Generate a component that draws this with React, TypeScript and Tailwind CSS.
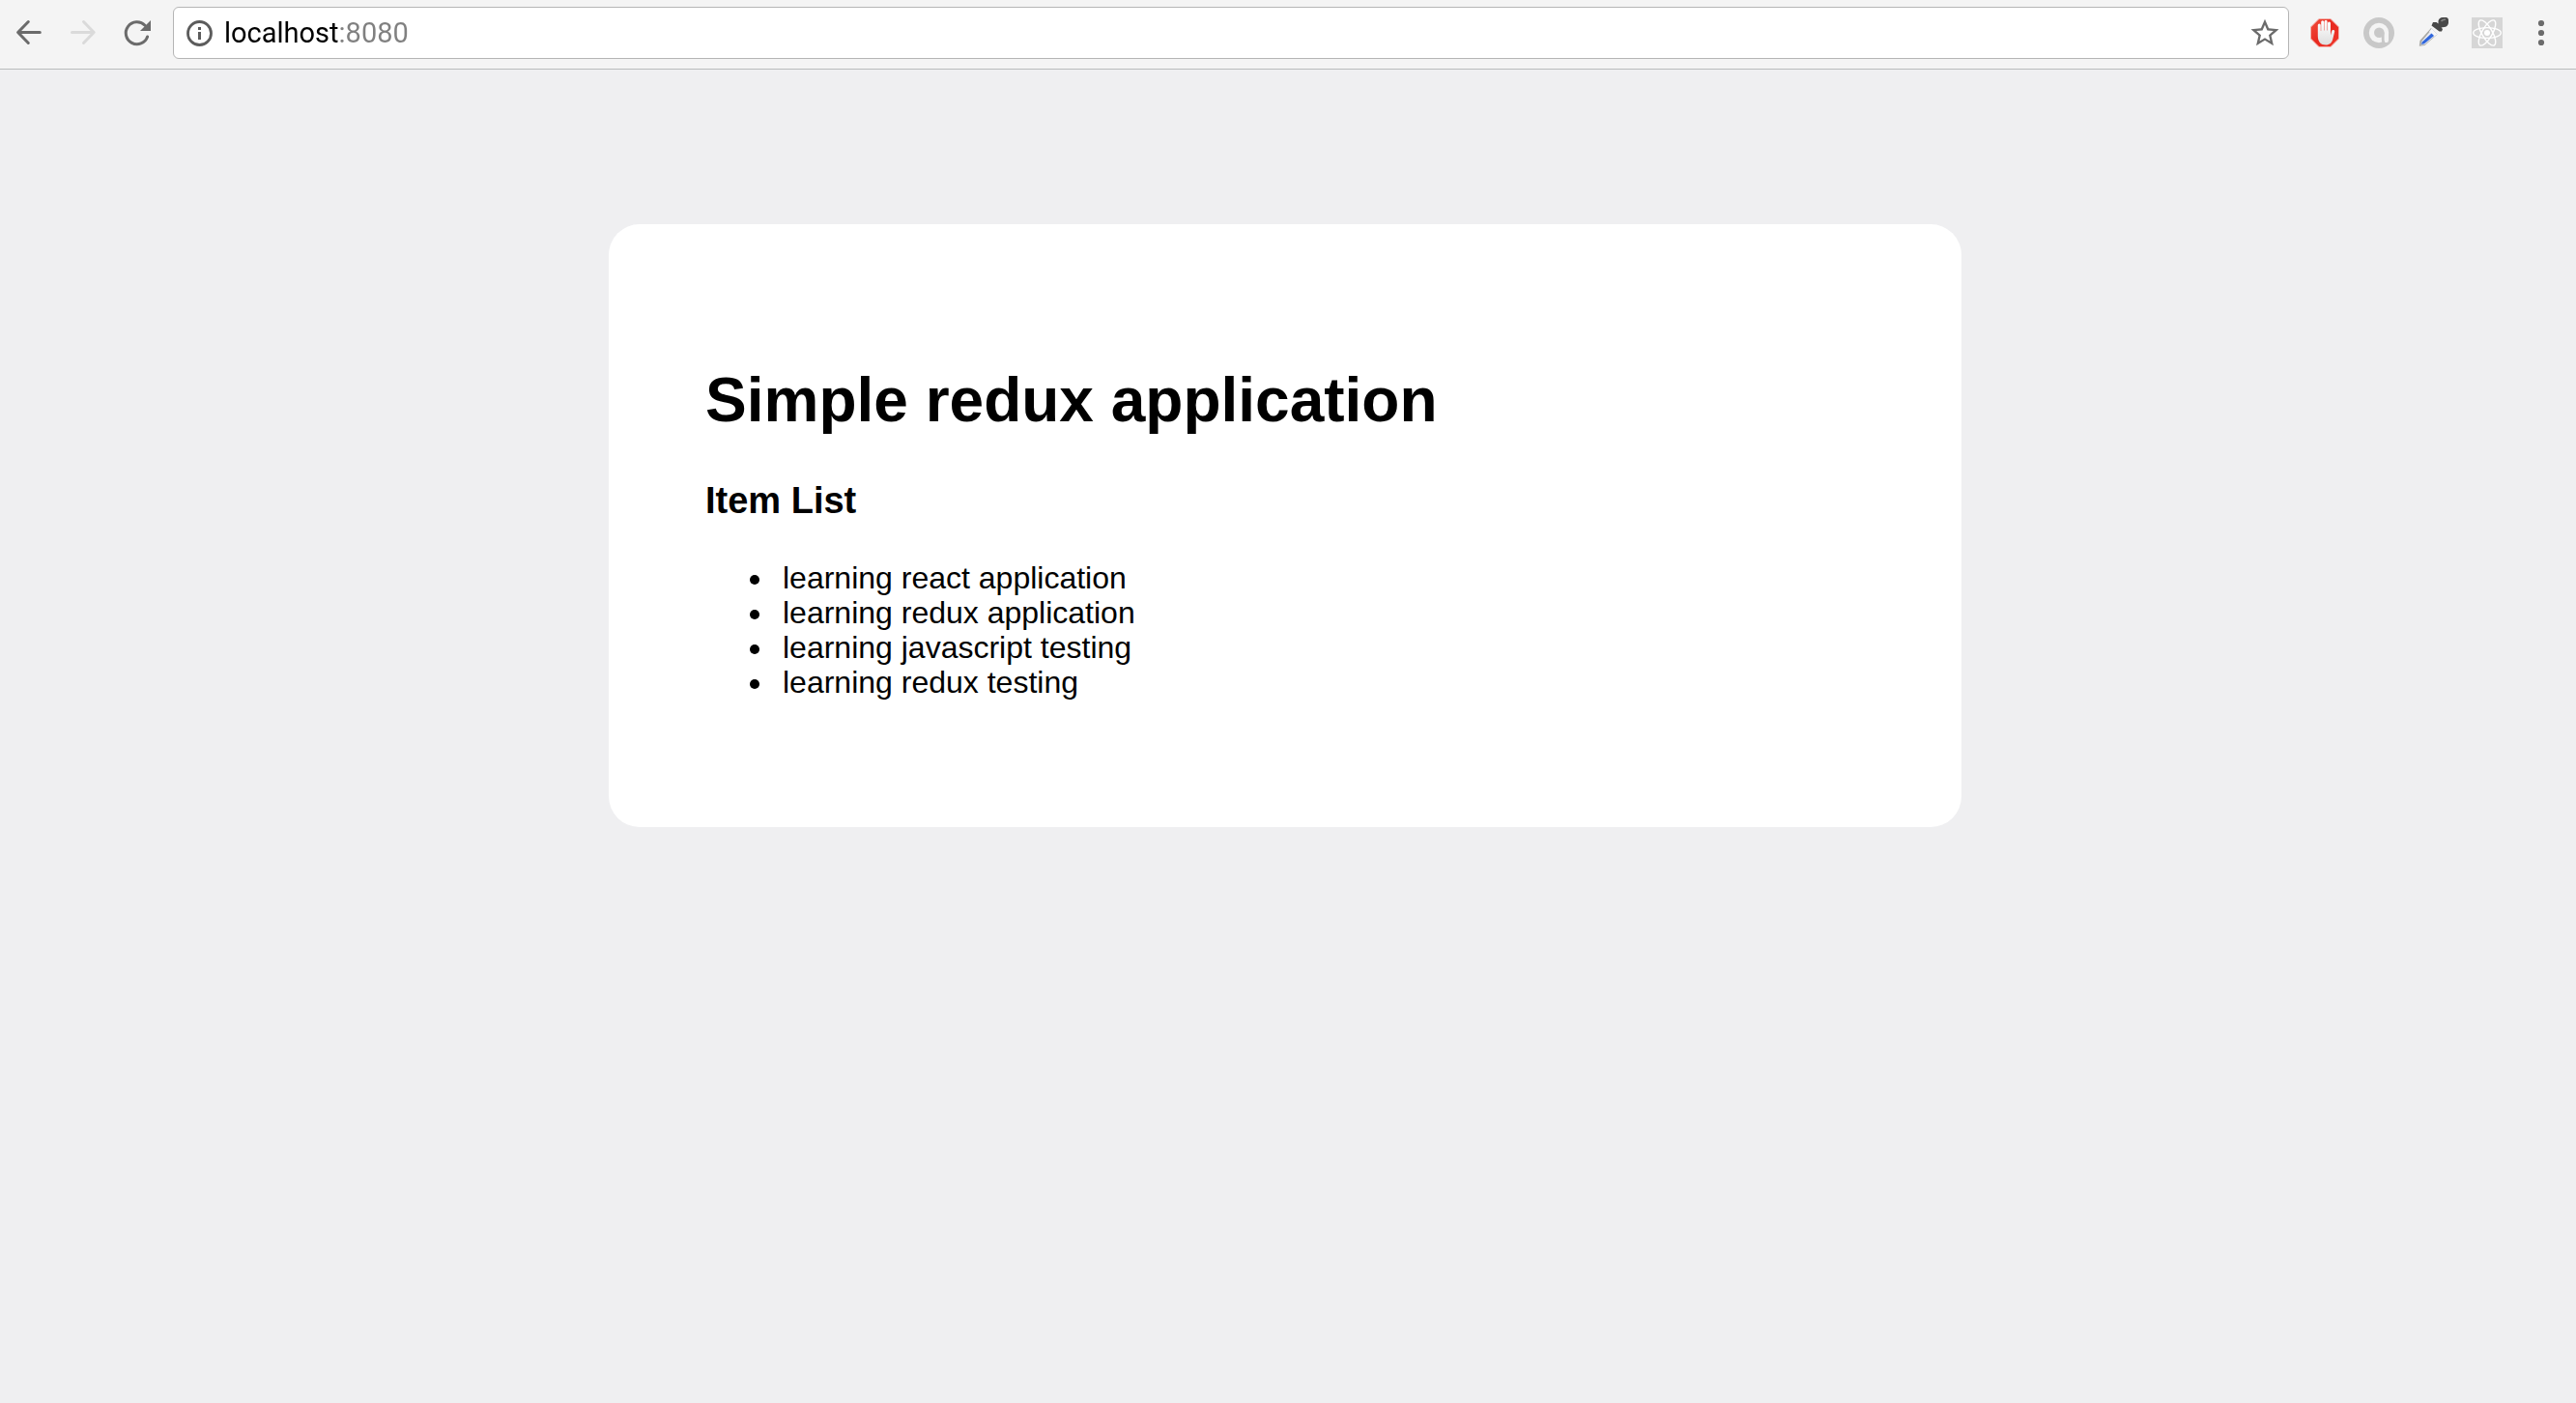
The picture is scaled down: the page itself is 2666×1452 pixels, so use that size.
import type { ReactNode } from "react";

const items = [
  "learning react application",
  "learning redux application",
  "learning javascript testing",
  "learning redux testing",
];

function ToolButton({ label, disabled, children }: { label: string; disabled?: boolean; children: ReactNode }) {
  return (
    <button type="button" aria-label={label} disabled={disabled} className="flex h-14 w-14 shrink-0 items-center justify-center">
      <svg viewBox="0 0 32 32" className="h-8 w-8" fill="none" aria-hidden="true">
        {children}
      </svg>
    </button>
  );
}

function Toolbar() {
  return (
    <header className="flex h-18 items-center border-b border-[#b9bbbc] bg-[#f4f4f4] pr-2 pb-[3px] pl-0.5">
      <nav aria-label="History" className="flex">
        <ToolButton label="Back">
          <path d="M27.3 15.5H5M15.3 4.5L4.6 15.5L15.3 26.5" stroke="#6b6b6b" strokeWidth="3" strokeLinecap="round" strokeLinejoin="round" />
        </ToolButton>
        <ToolButton label="Forward" disabled>
          <path d="M4.5 15.5H27M16.5 4.5L27.2 15.5L16.5 26.5" stroke="#dadada" strokeWidth="3" strokeLinecap="round" strokeLinejoin="round" />
        </ToolButton>
        <ToolButton label="Reload">
          <path d="M26.6 20A11.5 11.5 0 1 1 24 8.2" stroke="#6b6b6b" strokeWidth="3" strokeLinecap="round" />
          <path d="M30 3V14H19Z" fill="#6b6b6b" />
        </ToolButton>
      </nav>

      <div className="mx-[9px] flex h-[54px] min-w-0 flex-1 items-center rounded-md border border-[#b5b5b5] bg-white">
        <button type="button" aria-label="View site information" className="ml-2.5 shrink-0">
          <svg viewBox="0 0 32 32" className="h-8 w-8" aria-hidden="true">
            <circle cx="16.5" cy="16.5" r="12" fill="none" stroke="#5c5c5c" strokeWidth="2.8" />
            <path d="M15 10h3v3h-3zM15 15h3v8h-3z" fill="#5c5c5c" />
          </svg>
        </button>
        <input
          type="text"
          aria-label="Address"
          defaultValue="localhost:8080"
          spellCheck={false}
          className="ml-2.5 h-10 min-w-0 flex-1 bg-[linear-gradient(90deg,#000_119px,#808080_119px)] bg-clip-text font-['Roboto',sans-serif] text-[29px] leading-10 text-transparent caret-black outline-none"
        />
        <button type="button" aria-label="Bookmark this page" className="mr-2 shrink-0">
          <svg viewBox="0 0 32 32" className="h-8 w-8" aria-hidden="true">
            <path
              transform="translate(-1.4 -1.2) scale(1.45)"
              fill="#6b6b6b"
              d="M22 9.24l-7.19-.62L12 2 9.19 8.63 2 9.24l5.46 4.73L5.82 21 12 17.27 18.18 21l-1.63-7.03L22 9.24zM12 15.4l-3.76 2.27 1-4.28-3.32-2.88 4.38-.38L12 6.1l1.71 4.04 4.38.38-3.32 2.88 1 4.28L12 15.4z"
            />
          </svg>
        </button>
      </div>

      <div className="flex">
        <ToolButton label="AdBlock">
          <defs>
            <linearGradient id="stop" x1="0" y1="0" x2="1" y2="1">
              <stop offset="0" stopColor="#f2513f" />
              <stop offset="0.5" stopColor="#e8291f" />
              <stop offset="1" stopColor="#f0382c" />
            </linearGradient>
            <linearGradient id="palm" x1="0" y1="0" x2="0" y2="1">
              <stop offset="0" stopColor="#ffffff" />
              <stop offset="1" stopColor="#dedede" />
            </linearGradient>
          </defs>
          <path d="M10 1.5H22L30.5 10V22L22 30.5H10L1.5 22V10Z" fill="url(#stop)" stroke="#f3b3ad" strokeWidth="1" />
          <path
            d="M8.8 19V8a1.5 1.5 0 0 1 3 0V14h.4V4.700a1.5 1.5 0 0 1 3 0V13.500h.4V4.200a1.500 1.500 0 0 1 3 0v9.300h.4V6a1.500 1.500 0 0 1 3 0v12.500l1.200-4.300c.6-1.800 3.300-1.300 3 .6L24.300 22.500c-.9 3.700-3.200 6-7.300 6-5 0-8.200-3-8.200-9.500z"
            fill="url(#palm)"
          />
        </ToolButton>
        <ToolButton label="Avast Online Security">
          <circle cx="16" cy="16" r="16" fill="#c8c8c8" />
          <path d="M22 26H24.500Q26 25.500 26 23.500V16H21.500Z" fill="#f4f4f4" />
          <circle cx="16" cy="16" r="10.200" fill="#f4f4f4" />
          <circle cx="16.300" cy="15.700" r="5.300" fill="#c8c8c8" />
          <path d="M18.800 15.500H21.600V23.500Q21.600 25.500 23 26.300L20.500 27.500Q18.800 26 18.800 23.500Z" fill="#c8c8c8" />
        </ToolButton>
        <ToolButton label="Color picker">
          <path d="M14 11L20.500 17.500L7.500 29L1.800 29.800L2.500 24Z" fill="#a8a8a4" />
          <path d="M14.500 11.500L20.500 17.500L17 20L12 15Z" fill="#f4f6fb" />
          <path d="M12.500 15L17.500 19.500L7.500 28L3.500 28.500L4.500 24.500Z" fill="#e9ebf2" />
          <path d="M14.500 16.500L17 19L7 27.300L3.800 28L5 25.200Z" fill="#2f66dc" />
          <path d="M16 5L19.500 5L21.500 6.500V3.500Q22.500 0 26 0H30Q32 .5 32 2.500V6Q31 10 27.500 10L24.500 10.500L26 12L25 14.500H22.500L14.500 8.500Z" fill="#484848" />
          <path d="M24.500 4Q26 1.800 29 2.200" stroke="#858585" strokeWidth="1.500" />
        </ToolButton>
        <ToolButton label="React Developer Tools">
          <path d="M0 0H32V32H0Z" fill="#d6d6d6" />
          <circle cx="16" cy="16" r="3" fill="#fff" />
          <g stroke="#fff" strokeWidth="1.400">
            <ellipse cx="16" cy="16" rx="14.300" ry="5.400" />
            <ellipse cx="16" cy="16" rx="14.800" ry="5.400" transform="rotate(60 16 16)" />
            <ellipse cx="16" cy="16" rx="14.800" ry="5.400" transform="rotate(120 16 16)" />
          </g>
        </ToolButton>
        <ToolButton label="Menu">
          <g fill="#6b6b6b">
            <circle cx="16" cy="6" r="3.100" />
            <circle cx="16" cy="16" r="3.100" />
            <circle cx="16" cy="26" r="3.100" />
          </g>
        </ToolButton>
      </div>
    </header>
  );
}

export default function App() {
  return (
    <div className="flex min-h-screen flex-col bg-[#efeff1] font-['Liberation_Sans',Arial,sans-serif] text-black">
      <Toolbar />
      <main className="flex-1 py-40 pr-1.5">
        <section className="mx-auto max-w-[1400px] rounded-[32px] bg-white px-25 pt-[145px] pb-33">
          <h1 className="text-[64px] leading-[74px] font-bold">Simple redux application</h1>
          <h2 className="mt-[45px] text-[38px] leading-11 font-bold">Item List</h2>
          <ul className="mt-10 list-disc pl-18 text-[32px] leading-9">
            {items.map((item) => (
              <li key={item} className="pl-2">
                {item}
              </li>
            ))}
          </ul>
        </section>
      </main>
    </div>
  );
}
